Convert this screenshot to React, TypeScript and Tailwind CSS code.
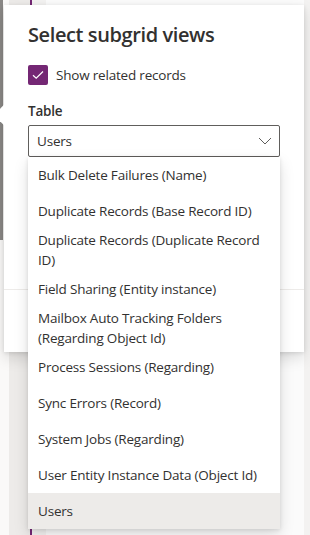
import React from "react";

const items: string[][] = [
  ["Bulk Delete Failures (Name)"],
  ["Duplicate Records (Base Record ID)"],
  ["Duplicate Records (Duplicate Record", "ID)"],
  ["Field Sharing (Entity instance)"],
  ["Mailbox Auto Tracking Folders", "(Regarding Object Id)"],
  ["Process Sessions (Regarding)"],
  ["Sync Errors (Record)"],
  ["System Jobs (Regarding)"],
  ["User Entity Instance Data (Object Id)"],
  ["Users"],
];

export default function App() {
  return (
    <div className="relative w-[310px] h-[535px] overflow-hidden bg-[#faf9f8] font-['Open_Sans',sans-serif] text-[#323130]">
      {/* background canvas */}
      <div className="flex h-full">
        <div className="w-[3px] flex flex-col">
          <div className="h-[240px] bg-[#8a8886]" />
          <div className="flex-1 bg-[#faf9f8]" />
        </div>
        <div className="w-[6px] bg-[#faf9f8]" />
        <div className="w-[21px] bg-[#edebe9]" />
        <div className="w-[2px] bg-[#742774]" />
        <div className="w-[14px] bg-[#f3f2f1]" />
        <div className="flex-1 bg-[#fbfbfb]" />
        <div className="w-[6px] bg-[#f3f2f1]" />
      </div>

      {/* callout panel */}
      <div className="absolute left-[4px] top-[5px] w-[300px] h-[347px] bg-white shadow-[0_6px_14px_rgba(0,0,0,0.13),0_1px_4px_rgba(0,0,0,0.11)] flex flex-col">
        <div className="absolute left-[-6px] top-[100px] w-5 h-5 rotate-45 bg-white" />
        <div className="relative flex-1 flex flex-col px-6 pt-4">
          <div className="text-[20px] leading-[28px] font-semibold tracking-[-0.4px]">Select subgrid views</div>
          <div className="mt-4 flex items-center gap-2 h-5">
            <div className="w-5 h-5 rounded-[2px] bg-[#742774] flex items-center justify-center">
              <svg width="12" height="10" viewBox="0 0 12 10" fill="none">
                <path d="M1 5.2 L4.2 8.2 L11 1.5" stroke="white" strokeWidth="1.2" />
              </svg>
            </div>
            <span className="text-[13.5px] leading-5 tracking-[-0.2px]">Show related records</span>
          </div>
          <div className="mt-4 text-[13.5px] leading-5 font-semibold tracking-[-0.2px]">Table</div>
          <div className="mt-1 h-8 border border-[#605e5c] rounded-[2px] flex items-center justify-between pl-2 pr-[7px]">
            <span className="text-[13.5px] leading-5 tracking-[-0.2px]">Users</span>
            <svg width="14" height="8" viewBox="0 0 14 8" fill="none">
              <path d="M1 1 L7 7 L13 1" stroke="#605e5c" strokeWidth="1" />
            </svg>
          </div>
        </div>
        <div className="h-[63px] border-t border-[#edebe9]" />
      </div>

      {/* dropdown */}
      <div className="absolute left-[28px] top-[157px] w-[252px] bg-white shadow-[0_6px_14px_rgba(0,0,0,0.13),0_1px_4px_rgba(0,0,0,0.11)] flex flex-col">
        {items.map((lines, i) => (
          <div
            key={i}
            className={`min-h-[36px] py-px px-[10px] flex flex-col justify-center text-[13.5px] leading-5 tracking-[-0.2px] whitespace-nowrap ${
              i === items.length - 1 ? "bg-[#edebe9]" : ""
            }`}
          >
            {lines.map((l, j) => (
              <span key={j}>{l}</span>
            ))}
          </div>
        ))}
      </div>
    </div>
  );
}
